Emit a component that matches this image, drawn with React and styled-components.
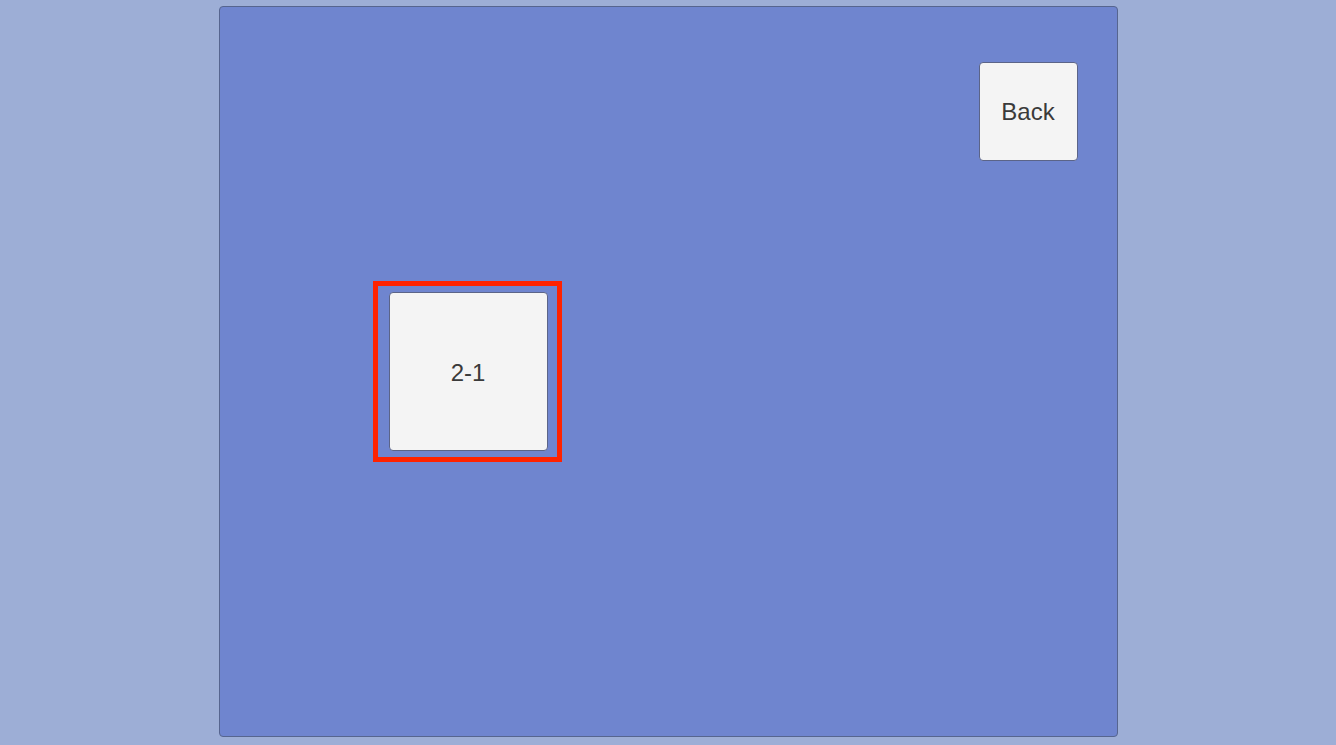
import React from 'react'
import styled, { createGlobalStyle } from 'styled-components'

const GlobalStyle = createGlobalStyle`
    html, body {
        margin: 0;
        padding: 0;
        background: #9daed6;
        font-family: "Liberation Sans", Arial, sans-serif;
    }
`

const App = () => {
    const levels = ['2-1']
    const selected = 0

    return (
        <>
            <GlobalStyle />
            <Page>
                <Panel>
                    <TopBar>
                        <Button size={99}>Back</Button>
                    </TopBar>
                    <LevelGrid>
                        {levels.map((name, index) => (
                            <Slot key={name} active={index === selected}>
                                <Button size={159} lower>{name}</Button>
                            </Slot>
                        ))}
                    </LevelGrid>
                </Panel>
            </Page>
        </>
    )
}

const Page = styled.div`
    display: flex;
    justify-content: center;
    height: 745px;
    padding-top: 6px;
    box-sizing: border-box;
`

const Panel = styled.div`
    display: flex;
    flex-direction: column;
    width: 899px;
    height: 731px;
    box-sizing: border-box;
    background: #6f85cf;
    border: 1px solid #56658f;
    border-radius: 4px;
`

const TopBar = styled.div`
    display: flex;
    justify-content: flex-end;
    padding: 55px 39px 0 0;
`

const LevelGrid = styled.div`
    display: flex;
    flex-wrap: wrap;
    gap: 20px;
    padding: 120px 0 0 153px;
`

const Slot = styled.div`
    display: flex;
    padding: 6px 9px 6px 11px;
    border: 5px solid ${props => props.active ? '#ff2200' : 'transparent'};
`

const Button = styled.div`
    display: flex;
    align-items: center;
    justify-content: center;
    width: ${props => props.size}px;
    height: ${props => props.size}px;
    box-sizing: border-box;
    padding-top: ${props => props.lower ? 3 : 0}px;
    background: #f4f4f4;
    border: 1px solid #5b6488;
    border-radius: 4px;
    color: #3a3a3a;
    font-size: 24px;
`

export default App
